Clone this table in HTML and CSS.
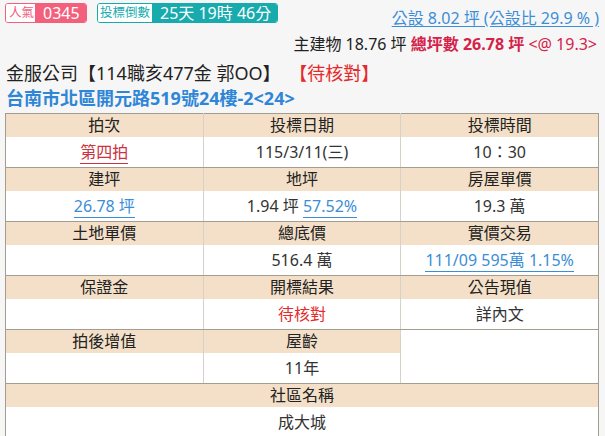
FILE: index.html
```html
<!DOCTYPE html>
<html lang="zh-Hant">
<head>
<meta charset="utf-8">
<link rel="stylesheet" href="styles.css">
</head>
<body>
<div class="top">
  <div class="badges">
    <span class="badge pink"><span class="lbl">人氣</span><span class="val">0345</span></span>
    <span class="badge teal"><span class="lbl">投標倒數</span><span class="val">25天 19時 46分</span></span>
  </div>
  <a class="pub" href="#">公設 8.02 坪 (公設比 29.9 % )</a>
</div>
<div class="area">主建物 18.76 坪 <b class="total">總坪數 26.78 坪</b> <span class="unit">&lt;@ 19.3&gt;</span></div>
<div class="title">金服公司【114職亥477金 郭OO】 <span class="status">【待核對】</span></div>
<div class="addr">台南市北區開元路519號24樓-2&lt;24&gt;</div>
<table class="info">
  <tr class="hd"><td>拍次</td><td>投標日期</td><td>投標時間</td></tr>
  <tr class="dt"><td><a class="lnk red" href="#">第四拍</a></td><td>115/3/11(三)</td><td>10：30</td></tr>
  <tr class="hd"><td>建坪</td><td>地坪</td><td>房屋單價</td></tr>
  <tr class="dt"><td><a class="lnk" href="#">26.78 坪</a></td><td>1.94 坪 <a class="lnk" href="#">57.52%</a></td><td>19.3 萬</td></tr>
  <tr class="hd"><td>土地單價</td><td>總底價</td><td>實價交易</td></tr>
  <tr class="dt"><td></td><td>516.4 萬</td><td><a class="lnk" href="#">111/09 595萬 1.15%</a></td></tr>
  <tr class="hd"><td>保證金</td><td>開標結果</td><td>公告現值</td></tr>
  <tr class="dt"><td></td><td class="warn">待核對</td><td>詳內文</td></tr>
  <tr class="hd"><td>拍後增值</td><td>屋齡</td><td class="blank" rowspan="2"></td></tr>
  <tr class="dt"><td></td><td>11年</td></tr>
  <tr class="hd"><td colspan="3">社區名稱</td></tr>
  <tr class="dt"><td colspan="3">成大城</td></tr>
</table>
</body>
</html>
```

FILE: styles.css
```css
html, body {
  margin: 0;
  padding: 0;
  background: #f6f6f6;
}
body {
  padding: 3px 6px 0 5px;
  font-family: "Noto Sans", "Noto Sans CJK TC", sans-serif;
  color: #222;
}
a { text-decoration: none; }

.top {
  display: flex;
  justify-content: space-between;
  align-items: flex-start;
  height: 20px;
}
.badges {
  display: flex;
  gap: 10px;
}
.badge {
  display: flex;
  flex-shrink: 0;
  white-space: nowrap;
  height: 20px;
  box-sizing: border-box;
  border-radius: 3px;
  overflow: hidden;
  line-height: 18px;
}
.badge .lbl {
  background: #fff;
  font-size: 12.5px;
  padding: 0 3px;
}
.badge .val {
  color: #fff;
}
.pink { border: 1px solid #f2607c; }
.pink .lbl { color: #f2607c; width: 29px; box-sizing: border-box; }
.pink .val { background: #f2607c; font-size: 16px; width: 51px; box-sizing: border-box; padding-left: 8px; }
.teal { border: 1px solid #17abae; }
.teal .lbl { color: #17abae; width: 54px; box-sizing: border-box; padding: 0 2px; }
.teal .val { background: #17abae; font-size: 16px; width: 125px; box-sizing: border-box; padding-left: 8px; }

.pub {
  color: #3b8ed6;
  font-size: 16px;
  line-height: 18px;
  margin-top: 6px;
  text-decoration: underline;
  text-underline-offset: 2px;
  white-space: nowrap;
}

.area {
  text-align: right;
  font-size: 16px;
  line-height: 18px;
  margin-top: 12px;
  padding-right: 2px;
}
.area .total { color: #d4224a; font-weight: bold; }
.area .unit { color: #d4224a; }

.title {
  font-size: 18px;
  line-height: 24px;
  margin-top: 8px;
  padding-left: 1px;
}
.title .status { color: #e42a2a; margin-left: 4px; }

.addr {
  font-size: 18px;
  font-weight: bold;
  color: #2f86d6;
  line-height: 20px;
  margin-top: 3px;
  padding-left: 1px;
}

.info {
  width: 100%;
  margin-top: 5px;
  border-collapse: collapse;
  table-layout: fixed;
  border: 1px solid #a39c90;
  font-size: 16px;
  color: #333;
}
.info td {
  text-align: center;
  padding: 0;
  border-left: 1px solid #d6d2ca;
}
.info td:first-child { border-left: none; }
.info tr.hd td {
  background: #f4e0c8;
  height: 23px;
  line-height: 23px;
  color: #222;
}
.info tr.dt td {
  background: #fff;
  height: 30px;
  line-height: 28px;
  border-bottom: 1px solid #a39c90;
}
.info td.blank {
  background: #fff !important;
  border-bottom: 1px solid #a39c90;
}
.lnk {
  color: #3b8ed6;
  display: inline-block;
  line-height: 22px;
  border-bottom: 1px solid #3b8ed6;
}
.lnk.red {
  color: #cc3340;
  border-bottom-color: #cc3340;
}
.warn { color: #e42a2a; }
```
